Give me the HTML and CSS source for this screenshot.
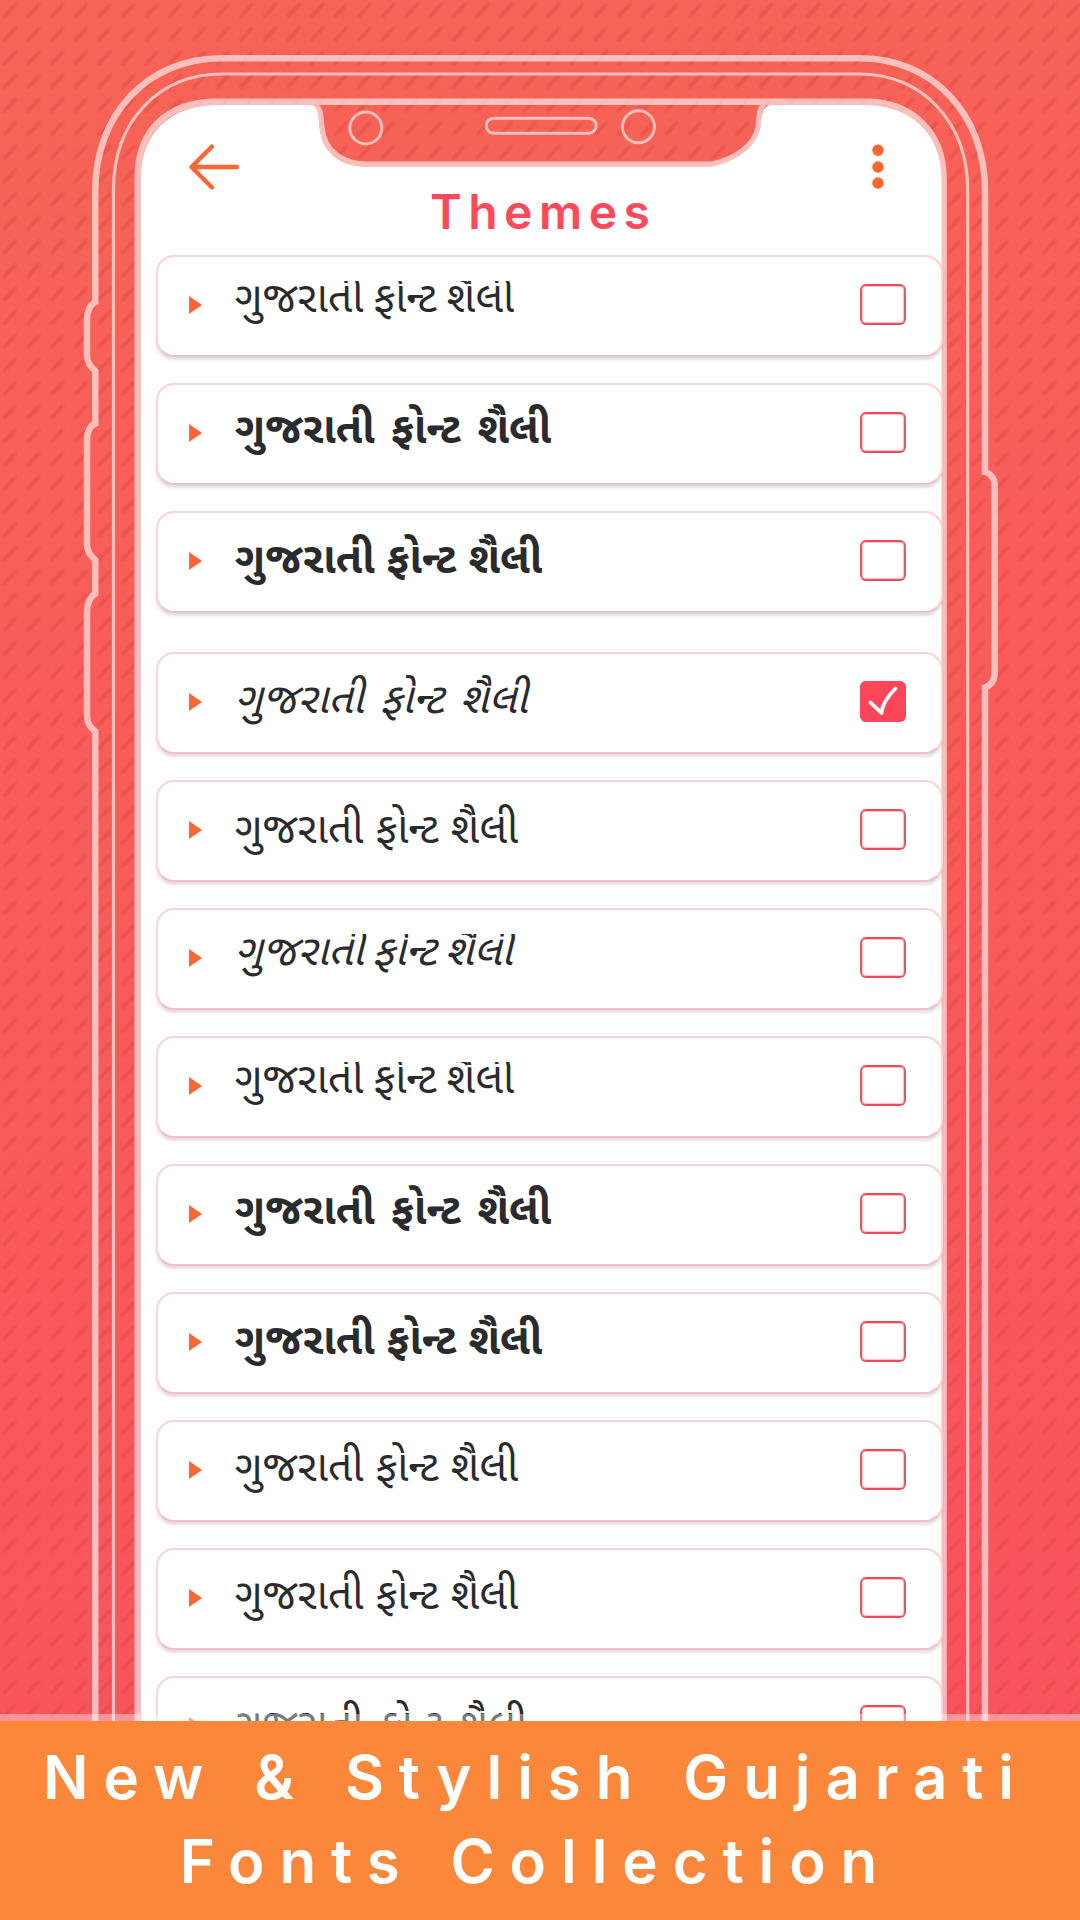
FILE: index.html
```html
<!DOCTYPE html>
<html lang="gu">
<head>
    <meta charset="UTF-8">
    <meta name="viewport" content="width=device-width, initial-scale=1.0">
    <title>Themes</title>
    <link rel="stylesheet" href="styles.css">
</head>
<body>
    <div class="page">
        <svg class="frame" width="1080" height="1920" viewBox="0 0 1080 1920" fill="none">
            <defs>
                <pattern id="dashes" width="23.62" height="23.607" patternUnits="userSpaceOnUse">
                    <path d="M4.5 16.5L15.5 4.8" stroke="#d9433f" stroke-opacity=".22" stroke-width="4.8" stroke-linecap="round"/>
                    <path d="M5.500 15.500L14.500 5.800" stroke="#d9433f" stroke-opacity=".28" stroke-width="2.600" stroke-linecap="round"/>
                </pattern>
            </defs>
            <rect width="1080" height="1920" fill="url(#dashes)"/>
            <!-- screen -->
            <path fill="#fff" d="M141 1920V177C141 133 170 105 217 105H310.700C315 105 317.500 109 318.500 117C319.500 125 319.500 131 321.700 138C327 156 345 166.500 366 166.500H712C738 161 757 146 760.500 127C761.500 117 762 105 771 105H867C910 105 941.500 134 941.500 178V1920Z"/>
            <g stroke="#fff" opacity=".6">
                <path stroke-width="6.500" d="M95.300 1920V731.500C90.500 728 87 724 87 716V612C87 602 90 597 95.300 593.500V560C90.500 556 87 552 87 545V441C87 431 90 426 95.300 423.500V371C90.500 367 87 363 87 355V320C87 310 90 305 95.300 302V190C95.300 115 147 58.300 222 58.300H860C933 58.300 985 115 985 190V472C991.500 474 994.700 478 994.700 486V673C994.700 681 991.500 685 985 687.500V1920"/>
                <path stroke-width="3.200" d="M113.500 1920V190C113.500 122 158 74 222 74H860C922 74 967.700 122 967.700 190V1920"/>
                <path stroke-width="6.500" d="M137.800 1920V177C137.800 130 168 101.700 217 101.700H867C912 101.700 943.500 133 943.500 178V1920"/>
                <path stroke-width="5.200" d="M313 103C318.500 106 320.500 111 321 117C322 125 322 131 324 137C329 154 347 164 366 164H712C736 159 755 145 758 127C759 117 759 108 765 103"/>
                <g stroke-width="3">
                    <circle cx="365.800" cy="128" r="16"/>
                    <circle cx="638.500" cy="126.800" r="16"/>
                    <rect x="486.200" y="118.200" width="110" height="15" rx="7.500"/>
                </g>
            </g>
        </svg>

        <div class="screen">
            <header class="header">
                <svg class="back" width="52" height="50" viewBox="0 0 52 50" fill="none" stroke="#ff6630" stroke-width="4.400" stroke-linecap="round" stroke-linejoin="round">
                    <path d="M49 25H3.500M24 4.500L3.500 25L24 45.500"/>
                </svg>
                <h1 class="title">Themes</h1>
                <svg class="more" width="12" height="46" viewBox="0 0 12 46" fill="#ff6630">
                    <circle cx="6" cy="6.300" r="5.700"/>
                    <circle cx="6" cy="23" r="5.700"/>
                    <circle cx="6" cy="39" r="5.700"/>
                </svg>
            </header>

            <div class="list">
                <div class="card">
                    <span class="arrow"></span>
                    <span class="text cut">ગુજરાતી ફોન્ટ શૈલી</span>
                    <span class="check"></span>
                </div>
                <div class="card">
                    <span class="arrow"></span>
                    <span class="text bold wide">ગુજરાતી ફોન્ટ શૈલી</span>
                    <span class="check"></span>
                </div>
                <div class="card">
                    <span class="arrow"></span>
                    <span class="text bold">ગુજરાતી ફોન્ટ શૈલી</span>
                    <span class="check"></span>
                </div>
                <div class="card selected">
                    <span class="arrow"></span>
                    <span class="text italic wide">ગુજરાતી ફોન્ટ શૈલી</span>
                    <span class="check">
                        <svg width="46" height="41" viewBox="0 0 46 41" fill="none" stroke="#fff" stroke-width="3.800" stroke-linecap="round" stroke-linejoin="round">
                            <path d="M10.500 21.500L21.500 32C22 26 26 17 35.500 7.500"/>
                        </svg>
                    </span>
                </div>
                <div class="card">
                    <span class="arrow"></span>
                    <span class="text low">ગુજરાતી ફોન્ટ શૈલી</span>
                    <span class="check"></span>
                </div>
                <div class="card">
                    <span class="arrow"></span>
                    <span class="text italic cut">ગુજરાતી ફોન્ટ શૈલી</span>
                    <span class="check"></span>
                </div>
                <div class="card">
                    <span class="arrow"></span>
                    <span class="text cut">ગુજરાતી ફોન્ટ શૈલી</span>
                    <span class="check"></span>
                </div>
                <div class="card">
                    <span class="arrow"></span>
                    <span class="text bold wide">ગુજરાતી ફોન્ટ શૈલી</span>
                    <span class="check"></span>
                </div>
                <div class="card">
                    <span class="arrow"></span>
                    <span class="text bold">ગુજરાતી ફોન્ટ શૈલી</span>
                    <span class="check"></span>
                </div>
                <div class="card">
                    <span class="arrow"></span>
                    <span class="text">ગુજરાતી ફોન્ટ શૈલી</span>
                    <span class="check"></span>
                </div>
                <div class="card">
                    <span class="arrow"></span>
                    <span class="text">ગુજરાતી ફોન્ટ શૈલી</span>
                    <span class="check"></span>
                </div>
                <div class="card">
                    <span class="arrow"></span>
                    <span class="text low wide">ગુજરાતી ફોન્ટ શૈલી</span>
                    <span class="check"></span>
                </div>
            </div>
        </div>

        <div class="banner">
            <p>New &amp; Stylish Gujarati</p>
            <p>Fonts Collection</p>
        </div>
    </div>
</body>
</html>
```

FILE: styles.css
```css
* {
    padding: 0;
    margin: 0;
    box-sizing: border-box;
}
.page {
    position: relative;
    width: 1080px;
    height: 1920px;
    overflow: hidden;
    background: linear-gradient(170deg, #f76456, #fa515f);
}
.frame {
    position: absolute;
    left: 0;
    top: 0;
}
.screen {
    position: relative;
    height: 1721px;
    padding: 0 137px 0 156px;
    overflow: hidden;
}
.header {
    display: flex;
    align-items: flex-start;
    height: 255px;
    padding: 142px 59px 0 32px;
}
.title {
    color: #fd4a5b;
    font-family: Inter, "Open Sans", sans-serif;
    font-size: 48px;
    font-weight: 600;
    line-height: 58px;
    letter-spacing: 6.5px;
    margin: 41px 0 0 190px;
}
.more {
    margin: 2px 0 0 auto;
}
.card {
    display: flex;
    align-items: flex-start;
    width: 787px;
    height: 102px;
    margin-bottom: 26px;
    padding: 0 35px 0 31px;
    background: #fff;
    border: 2px solid #fdd3d6;
    border-bottom-color: #f0c0c5;
    border-radius: 18px;
    box-shadow: 0 3px 3px rgba(0, 0, 0, .13);
}
.card.selected {
    margin-top: 39px;
}
.arrow {
    width: 0;
    height: 0;
    margin-top: 39px;
    border-left: 13px solid #ff6630;
    border-top: 9px solid transparent;
    border-bottom: 9px solid transparent;
}
.text {
    flex: 1;
    margin: 19px 0 0 33px;
    color: #2b2b2d;
    font-family: "Noto Sans Gujarati", "Noto Sans", sans-serif;
    font-size: 42.5px;
    line-height: 60px;
    word-spacing: 1px;
    white-space: nowrap;
}
.bold {
    font-weight: 700;
    margin-top: 20px;
}
.italic {
    font-style: italic;
}
.wide {
    word-spacing: 5.5px;
}
.bold.wide {
    margin-top: 18px;
}
.low {
    margin-top: 21px;
}
.cut {
    margin-top: 15px;
    word-spacing: -1px;
    clip-path: inset(9px 0 0 0);
}
.italic.cut {
    word-spacing: -2px;
}
.check {
    width: 46px;
    height: 41px;
    margin-top: 27px;
    border: 2px solid #ee4a5c;
    border-left-color: #d4606e;
    border-right-color: #d4606e;
    border-radius: 6px;
    box-shadow: inset 0 0 1px 0.5px rgba(238, 74, 92, .6);
}
.selected .check {
    background: #fd4759;
    border: none;
}
.banner {
    position: absolute;
    left: 0;
    top: 1714px;
    width: 1080px;
    height: 206px;
    padding: 14px 8px 0 0;
    border-top: 7px solid rgba(255, 255, 255, .38);
    background: #fb873b;
    background-clip: padding-box;
    color: #fff;
    font-family: Inter, "Open Sans", sans-serif;
    font-size: 60px;
    font-weight: 600;
    line-height: 84px;
    letter-spacing: 14.9px;
    word-spacing: 6px;
    text-align: center;
    white-space: nowrap;
}
```
